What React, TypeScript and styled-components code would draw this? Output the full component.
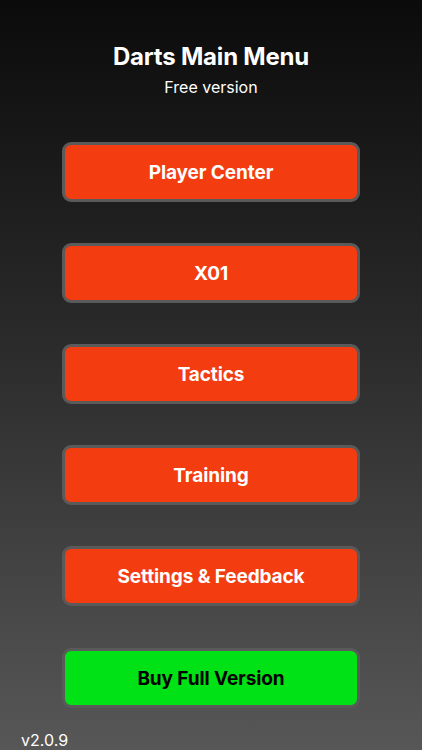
import styled, { createGlobalStyle } from 'styled-components';

const GlobalStyle = createGlobalStyle`
  html, body {
    margin: 0;
    padding: 0;
  }

  body {
    font-family: Inter, "Noto Sans", "Liberation Sans", sans-serif;
    background: #555555;
  }
`;

const Page = styled.div`
  width: 422px;
  height: 750px;
  box-sizing: border-box;
  display: flex;
  flex-direction: column;
  align-items: center;
  padding-top: 42px;
  background: linear-gradient(to bottom, #0b0b0b 0%, #2a2a2a 45%, #575757 100%);
  overflow: hidden;
`;

const Title = styled.h1`
  margin: 0;
  font-size: 24px;
  line-height: 30px;
  font-weight: 700;
  color: #ffffff;
  letter-spacing: -0.2px;
`;

const Subtitle = styled.p`
  margin: 4px 0 0;
  font-size: 16px;
  line-height: 22px;
  font-weight: 400;
  color: #ffffff;
`;

const Menu = styled.nav`
  display: flex;
  flex-direction: column;
  gap: 41px;
  margin-top: 44px;
`;

const MenuButton = styled.button<{ $variant?: 'primary' | 'buy' }>`
  width: 298px;
  height: 60px;
  box-sizing: border-box;
  border: 3px solid #5a5a5a;
  border-radius: 9px;
  background: ${p => (p.$variant === 'buy' ? '#00e116' : '#f33c10')};
  color: ${p => (p.$variant === 'buy' ? '#000000' : '#ffffff')};
  font-family: inherit;
  font-size: 19px;
  font-weight: 700;
  letter-spacing: -0.1px;
  padding: 0;
  margin-top: ${p => (p.$variant === 'buy' ? '1px' : '0')};
  cursor: pointer;
`;

const Version = styled.div`
  align-self: flex-start;
  margin-top: 22px;
  padding-left: 21px;
  font-size: 16px;
  line-height: 20px;
  color: #ffffff;
`;

const items = ['Player Center', 'X01', 'Tactics', 'Training', 'Settings & Feedback'];

const App = () => {
  return (
    <>
      <GlobalStyle />
      <Page>
        <Title>Darts Main Menu</Title>
        <Subtitle>Free version</Subtitle>
        <Menu>
          {items.map(label => (
            <MenuButton key={label}>{label}</MenuButton>
          ))}
          <MenuButton $variant='buy'>Buy Full Version</MenuButton>
        </Menu>
        <Version>v2.0.9</Version>
      </Page>
    </>
  );
};

export default App;
